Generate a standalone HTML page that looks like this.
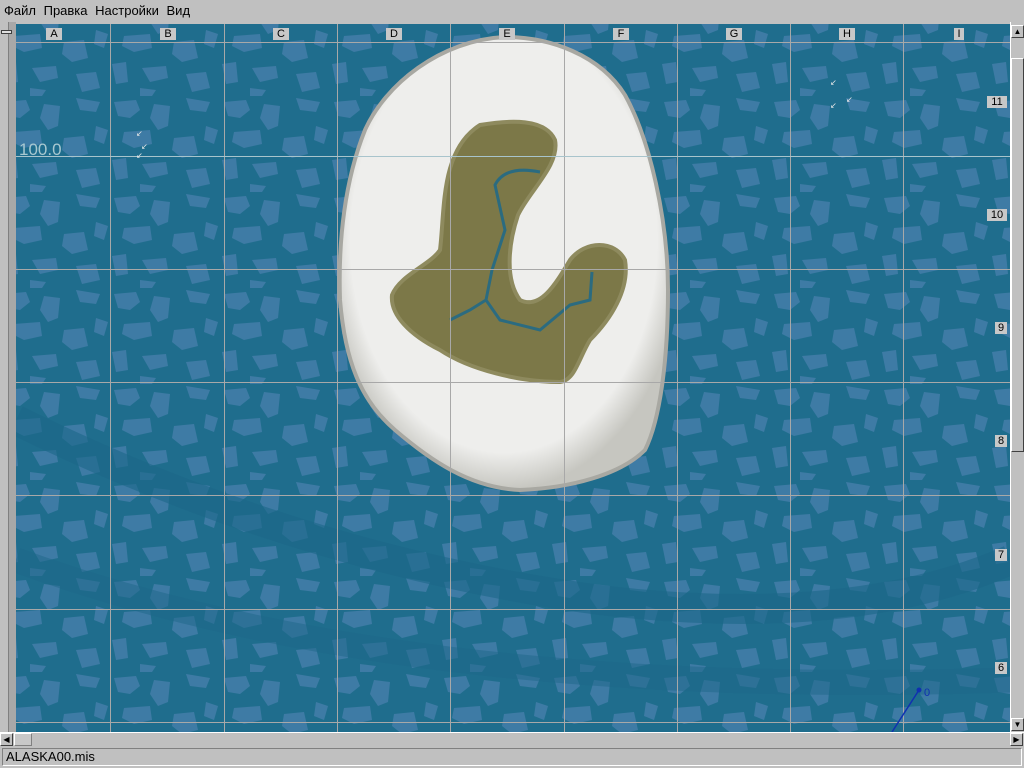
<!DOCTYPE html>
<html><head><meta charset="utf-8"><style>
*{margin:0;padding:0;box-sizing:border-box}
body{width:1024px;height:768px;background:#c0c0c0;font-family:"Liberation Sans",sans-serif;position:relative;overflow:hidden}
#menu{position:absolute;left:0;top:0;width:1024px;height:22px;background:#c0c0c0;font-size:13px;line-height:22px;padding-left:4px}
#menu span{margin-right:4px}
#leftbar{position:absolute;left:0;top:22px;width:16px;height:710px;background:#c0c0c0}
#leftbar .in{position:absolute;left:8px;top:0;width:8px;height:710px;background:#a8a8a8;border-left:1px solid #808080}
#map{position:absolute;left:16px;top:24px;width:994px;height:708px;overflow:hidden}
.lab{position:absolute;background:#c8c8c8;color:#000;font-size:11px;line-height:12px;height:12px;padding:0 2px;text-align:center}
#vs{position:absolute;left:1010px;top:22px;width:14px;height:722px;background:#c0c0c0;border-left:1px solid #fff}
#hs{position:absolute;left:0;top:732px;width:1024px;height:14px;background:#c0c0c0;border-top:1px solid #fff}
#status{position:absolute;left:2px;top:748px;width:1020px;height:18px;border:1px solid #808080;border-right-color:#fff;border-bottom-color:#fff;font-size:13px;line-height:16px;padding-left:3px}
.btn{position:absolute;width:13px;height:13px;background:#c0c0c0;border:1px solid;border-color:#fff #404040 #404040 #fff;font-size:8px;line-height:11px;text-align:center}
</style></head><body>
<div id="menu"><span>Файл</span> <span>Правка</span> <span>Настройки</span> <span>Вид</span></div>
<div id="leftbar"><div class="in"></div><div style="position:absolute;left:1px;top:8px;width:11px;height:4px;background:#e0e0e0;border:1px solid #404040"></div></div>
<div id="map">
<svg width="994" height="708" viewBox="16 24 994 708" xmlns="http://www.w3.org/2000/svg">
<defs>
<pattern id="p" x="0" y="0" width="110" height="96" patternUnits="userSpaceOnUse">
<rect width="110" height="96" fill="#1f6d8d"/>
<g fill="#3e7ba5">
<path d="M4 6 L26 4 L30 14 L20 22 L8 20 Z"/>
<path d="M44 8 L60 10 L58 30 L48 34 L40 22 Z"/>
<path d="M76 2 L100 6 L96 16 L80 14 Z"/>
<path d="M14 36 L40 34 L42 48 L24 52 L12 46 Z"/>
<path d="M64 42 L84 40 L88 58 L72 62 L62 54 Z"/>
<path d="M96 30 L108 34 L104 48 L94 44 Z"/>
<path d="M2 64 L16 62 L18 82 L6 84 Z"/>
<path d="M32 68 L56 66 L58 78 L40 82 Z"/>
<path d="M76 74 L96 72 L100 88 L82 92 Z"/>
<path d="M30 88 L46 90 L42 96 L30 96 Z"/>
</g>
</pattern>
<radialGradient id="g" cx="0.5" cy="0.45" r="0.55"><stop offset="0.85" stop-color="#eeeeec"/><stop offset="1" stop-color="#c6c6c0"/></radialGradient>
</defs>
<rect x="16" y="24" width="994" height="708" fill="url(#p)"/>
<path d="M16 420 Q300 560 600 600 Q850 630 1010 560" stroke="#1d6889" stroke-width="30" fill="none" opacity="0.6"/>
<path d="M16 560 Q400 700 1010 680" stroke="#1d6889" stroke-width="25" fill="none" opacity="0.5"/>
<path d="M505 37 C550 37 600 55 625 95 C650 140 668 220 668 290 C668 360 660 420 645 450 C620 475 570 488 520 490 C470 488 430 460 395 430 C360 400 345 360 340 300 C338 240 345 180 365 130 C385 85 440 40 505 37 Z" fill="url(#g)" stroke="#a8a8a2" stroke-width="4"/>
<path d="M480 125 C510 120 545 118 555 140 C560 165 530 190 518 215 C508 245 505 280 520 300 C540 310 555 285 570 260 C585 240 615 240 625 260 C630 290 610 320 590 340 C578 360 575 380 560 382 C520 382 470 370 440 350 C410 335 390 315 392 295 C400 275 430 265 440 250 C445 210 440 150 480 125 Z" fill="#7c7848" stroke="#8e8a5e" stroke-width="4"/>
<path d="M540 172 Q505 165 495 185 L505 230 L492 270 L486 300 L470 310 L450 320 M486 300 L500 320 L540 330 L570 305 L590 300 L592 272" stroke="#2b6b80" stroke-width="3" fill="none"/>
<g stroke="#a8a8a8" stroke-width="1">
<line x1="110.5" y1="24" x2="110.5" y2="732"/><line x1="224.5" y1="24" x2="224.5" y2="732"/><line x1="337.5" y1="24" x2="337.5" y2="732"/><line x1="450.5" y1="24" x2="450.5" y2="732"/><line x1="564.5" y1="24" x2="564.5" y2="732"/><line x1="677.5" y1="24" x2="677.5" y2="732"/><line x1="790.5" y1="24" x2="790.5" y2="732"/><line x1="903.5" y1="24" x2="903.5" y2="732"/>
<line x1="16" y1="42.5" x2="1010" y2="42.5"/><line x1="16" y1="269.5" x2="1010" y2="269.5"/><line x1="16" y1="382.5" x2="1010" y2="382.5"/><line x1="16" y1="495.5" x2="1010" y2="495.5"/><line x1="16" y1="609.5" x2="1010" y2="609.5"/><line x1="16" y1="722.5" x2="1010" y2="722.5"/>
</g>
<line x1="16" y1="156.5" x2="1010" y2="156.5" stroke="#a8c4cc"/>
<text x="19" y="155" font-family="Liberation Sans" font-size="17" fill="#a8c8d0">100.0</text>
<line x1="919" y1="690" x2="892" y2="732" stroke="#1030b0" stroke-width="1.5"/>
<circle cx="919" cy="690" r="2.5" fill="#1030b0"/>
<text x="924" y="696" font-family="Liberation Sans" font-size="11" fill="#1030b0">0</text>
<g fill="#e8e8e8" font-size="8" font-family="Liberation Sans"><text x="136" y="136">↙</text><text x="141" y="149">↙</text><text x="136" y="158">↙</text><text x="830" y="85">↙</text><text x="846" y="102">↙</text><text x="830" y="108">↙</text></g>
</svg>
<div class="lab" style="left:30px;top:4px;width:16px">A</div>
<div class="lab" style="left:144px;top:4px;width:16px">B</div>
<div class="lab" style="left:257px;top:4px;width:16px">C</div>
<div class="lab" style="left:370px;top:4px;width:16px">D</div>
<div class="lab" style="left:483px;top:4px;width:16px">E</div>
<div class="lab" style="left:597px;top:4px;width:16px">F</div>
<div class="lab" style="left:710px;top:4px;width:16px">G</div>
<div class="lab" style="left:823px;top:4px;width:16px">H</div>
<div class="lab" style="left:938px;top:4px;width:10px">I</div>
<div class="lab" style="left:971px;top:72px;width:20px">11</div>
<div class="lab" style="left:971px;top:185px;width:20px">10</div>
<div class="lab" style="left:979px;top:298px;width:12px">9</div>
<div class="lab" style="left:979px;top:411px;width:12px">8</div>
<div class="lab" style="left:979px;top:525px;width:12px">7</div>
<div class="lab" style="left:979px;top:638px;width:12px">6</div>
</div>
<div id="vs">
<div class="btn" style="left:0;top:3px">▲</div>
<div style="position:absolute;left:0;top:36px;width:13px;height:394px;background:#c0c0c0;border:1px solid;border-color:#fff #404040 #404040 #fff"></div>
<div class="btn" style="left:0;top:696px">▼</div>
</div>
<div id="hs">
<div class="btn" style="left:0;top:0">◀</div>
<div style="position:absolute;left:14px;top:0;width:18px;height:13px;background:#c8c8c8;border:1px solid;border-color:#fff #808080 #808080 #fff"></div>
<div class="btn" style="left:1010px;top:0">▶</div>
</div>
<div id="status">ALASKA00.mis</div>
</body></html>
